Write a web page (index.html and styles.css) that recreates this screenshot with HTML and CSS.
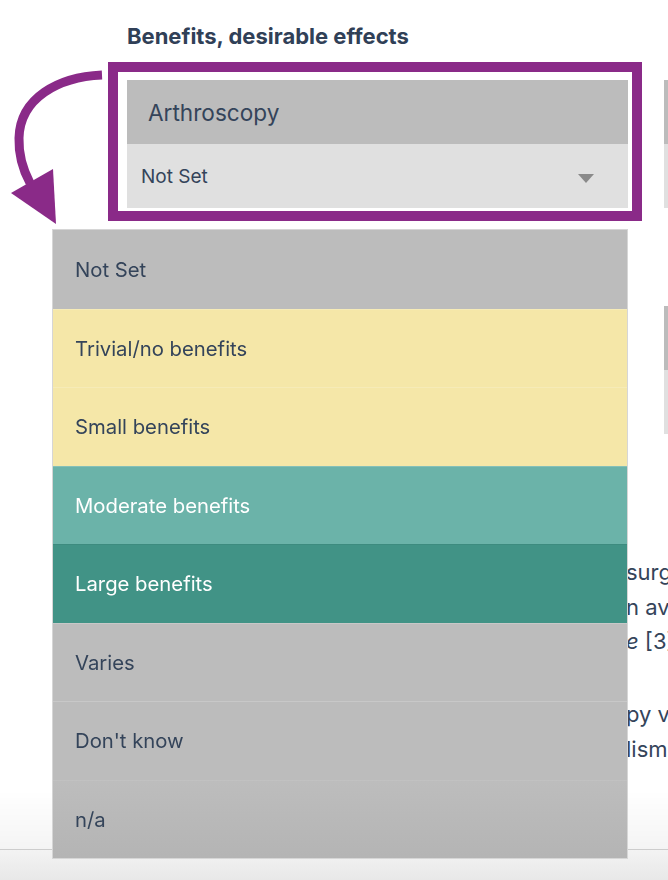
FILE: index.html
```html
<!DOCTYPE html>
<html lang="en">
<head>
<meta charset="utf-8">
<title>Benefits, desirable effects</title>
<link rel="stylesheet" href="styles.css">
</head>
<body>
<main class="page">
  <section class="criterion">
    <h2 class="criterion-title">Benefits, desirable effects</h2>
    <div class="option-row">
      <div class="option-card">
        <div class="option-name">Arthroscopy</div>
        <div class="option-select"><span>Not Set</span><span class="caret"></span></div>
      </div>
      <div class="option-card">
        <div class="option-name">Exercise therapy</div>
        <div class="option-select"><span>Not Set</span><span class="caret"></span></div>
      </div>
    </div>
  </section>
  <section class="criterion">
    <h2 class="criterion-title">Harms and burden, undesirable effects</h2>
    <div class="option-row">
      <div class="option-card">
        <div class="option-name">Arthroscopy</div>
        <div class="option-select"><span>Not Set</span><span class="caret"></span></div>
      </div>
      <div class="option-card">
        <div class="option-name">Exercise therapy</div>
        <div class="option-select"><span>Not Set</span><span class="caret"></span></div>
      </div>
    </div>
  </section>
  <div class="notes">
    <p>surgery<br>n average<br><em>e</em> [3]</p>
    <p>py versus<br>lism</p>
  </div>
</main>

<div class="annot-box"></div>
<svg class="annot-arrow" width="120" height="180" viewBox="0 60 120 180" aria-hidden="true">
  <path d="M102,75 C58,77 20,98 19,138 C18.5,155 22,168 30,183" fill="none" stroke="#8a2a88" stroke-width="9"/>
  <polygon points="11,193 53,169 56,224" fill="#8a2a88"/>
</svg>

<ul class="menu">
  <li class="menu-item is-grey">Not Set</li>
  <li class="menu-item is-yellow">Trivial/no benefits</li>
  <li class="menu-item is-yellow">Small benefits</li>
  <li class="menu-item is-teal">Moderate benefits</li>
  <li class="menu-item is-dark-teal">Large benefits</li>
  <li class="menu-item is-grey">Varies</li>
  <li class="menu-item is-grey">Don't know</li>
  <li class="menu-item is-grey is-last">n/a</li>
</ul>

<footer class="bottom-bar"></footer>
</body>
</html>
```

FILE: styles.css
```css
* { box-sizing: border-box; }

html, body {
  margin: 0;
  padding: 0;
}

body {
  width: 668px;
  height: 880px;
  overflow: hidden;
  position: relative;
  background: #ffffff;
  font-family: Inter, "Noto Sans", sans-serif;
  color: #304057;
}

.page {
  padding-left: 127px;
}

.criterion {
  margin-bottom: 18px;
}

.criterion-title {
  margin: 0;
  padding-top: 22px;
  height: 80px;
  font-size: 22px;
  line-height: 28px;
  font-weight: 700;
  color: #304057;
  white-space: nowrap;
}

.option-row {
  display: flex;
  gap: 36px;
}

.option-card {
  flex: 0 0 501px;
  width: 501px;
}

.option-name {
  height: 64px;
  display: flex;
  align-items: center;
  padding-left: 21px;
  background: #bcbcbc;
  font-size: 22.6px;
  color: #34445a;
}

.option-select {
  height: 64px;
  display: flex;
  align-items: center;
  justify-content: space-between;
  padding-left: 14px;
  padding-right: 34px;
  background: #e0e0e0;
  font-size: 19px;
  color: #34445a;
}

.caret {
  width: 0;
  height: 0;
  border-left: 8.5px solid transparent;
  border-right: 8.5px solid transparent;
  border-top: 9px solid #8a8a8a;
  margin-top: 4px;
}

.notes {
  padding-top: 103px;
  margin-left: 499px;
  font-size: 22px;
  line-height: 34.5px;
  color: #34445a;
  white-space: nowrap;
}

.notes p {
  margin: 0 0 38.5px 0;
}

.annot-box {
  position: absolute;
  left: 108px;
  top: 62px;
  width: 534px;
  height: 159px;
  border: 10px solid #8a2a88;
}

.annot-arrow {
  position: absolute;
  left: 0;
  top: 60px;
}

.menu {
  position: absolute;
  left: 52px;
  top: 229px;
  width: 576px;
  margin: 0;
  padding: 0;
  list-style: none;
  border: 1px solid #d6d6d6;
  z-index: 5;
}

.menu-item {
  height: 78.5px;
  display: flex;
  align-items: center;
  padding-left: 22px;
  font-size: 20.3px;
  color: #34445a;
  border-top: 1px solid rgba(255, 255, 255, 0.18);
}

.menu-item:first-child { border-top: 0; }

.is-grey { background: #bcbcbc; }
.is-yellow { background: #f5e7a8; }
.is-teal { background: #6bb3a9; color: #ffffff; }
.is-dark-teal { background: #419386; color: #ffffff; border-top-color: rgba(0, 0, 0, 0.05); }
.is-last { background: linear-gradient(#bdbdbd, #b4b4b4); }

.bottom-bar {
  position: fixed;
  left: 0;
  right: 0;
  bottom: 0;
  height: 31px;
  border-top: 1px solid #d6d6d6;
  background: linear-gradient(#f3f3f3, #e8e8e8);
  z-index: 4;
}

.bottom-bar::before {
  content: "";
  position: absolute;
  left: 0;
  right: 0;
  bottom: 100%;
  height: 60px;
  background: linear-gradient(rgba(0, 0, 0, 0), rgba(0, 0, 0, 0.045));
}
```
